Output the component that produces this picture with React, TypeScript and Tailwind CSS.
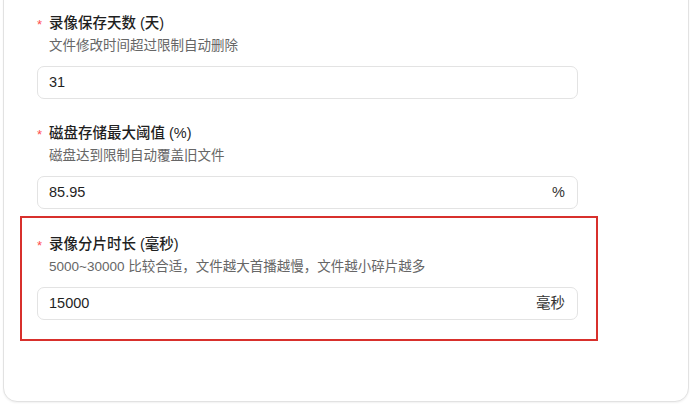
import React from 'react';

interface FieldProps {
    label: string;
    desc: string;
    value: string;
    suffix?: string;
}

const font = { fontFamily: '"Liberation Sans", "Noto Sans CJK SC", sans-serif' };

const Field: React.FC<FieldProps> = ({ label, desc, value, suffix }) => (
    <div className="flex flex-col">
        <div className="flex items-center h-[22px] text-[14.5px] font-medium text-[#1f1f1f]">
            <span className="w-[12px] text-[#ff4d4f] text-[13px] leading-none">*</span>
            {label}
        </div>
        <div className="pl-[12px] h-[22px] leading-[22px] text-[13.5px] text-[#666666]">{desc}</div>
        <div className="mt-[9px] h-[33px] w-[541px] flex items-center justify-between rounded-[7px] border border-[#e3e3e3] bg-white pl-[11px] pr-[12px] text-[14.5px] text-[#1f1f1f]">
            <span>{value}</span>
            {suffix && <span className="text-[#333333]">{suffix}</span>}
        </div>
    </div>
);

export default function App() {
    return (
        <div className="w-[692px] h-[407px] overflow-hidden bg-white" style={font}>
            <div className="mx-[3px] -mt-[20px] h-[422px] rounded-[14px] border border-[#e2e2e2] bg-white shadow-[0_1px_2px_rgba(0,0,0,0.06)] pl-[33px] pt-[32px]">
                <Field label="录像保存天数 (天)" desc="文件修改时间超过限制自动删除" value="31" />
                <div className="mt-[24px] mb-[7px]">
                    <Field label="磁盘存储最大阈值 (%)" desc="磁盘达到限制自动覆盖旧文件" value="85.95" suffix="%" />
                </div>
                {/* highlighted field */}
                <div className="-ml-[17px] w-[578px] border-2 border-[#d8302c] pl-[15px] pt-[16px] pb-[19px]">
                    <Field
                        label="录像分片时长 (毫秒)"
                        desc="5000~30000 比较合适，文件越大首播越慢，文件越小碎片越多"
                        value="15000"
                        suffix="毫秒"
                    />
                </div>
            </div>
        </div>
    );
}
